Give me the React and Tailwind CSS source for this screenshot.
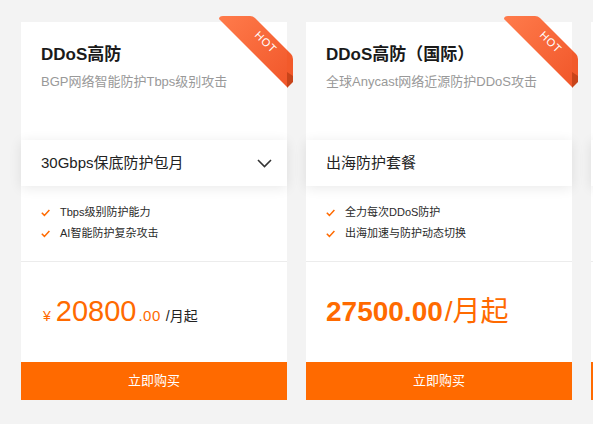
import React from 'react';

const font = { fontFamily: '"Liberation Sans", Arial, "Noto Sans CJK SC", sans-serif' };

const cards = [
  {
    title: 'DDoS高防',
    sub: 'BGP网络智能防护Tbps级别攻击',
    plan: '30Gbps保底防护包月',
    dropdown: true,
    features: ['Tbps级别防护能力', 'AI智能防护复杂攻击'],
    price: 'split',
  },
  {
    title: 'DDoS高防（国际）',
    sub: '全球Anycast网络近源防护DDoS攻击',
    plan: '出海防护套餐',
    dropdown: false,
    features: ['全力每次DDoS防护', '出海加速与防护动态切换'],
    price: 'bold',
  },
];

function Ribbon({ id }) {
  return (
    <svg
      className="absolute -top-[10px] -right-[10px] w-[82px] h-[80px] pointer-events-none"
      viewBox="215 12 82 80"
    >
      <defs>
        <linearGradient id={`rb-${id}`} x1="0" y1="0" x2="1" y2="1">
          <stop offset="0" stopColor="#ff7b4b" />
          <stop offset="1" stopColor="#f1572a" />
        </linearGradient>
      </defs>
      <path d="M219 19 Q219 16 223 16 L250 16 Q253 16 255 18 L287 50 L287 87 Z" fill={`url(#rb-${id})`} />
      <path d="M287 50 L291 54 Q293 56 293 59 L293 76 L287 76 Z" fill="#f25a2b" />
      <path d="M287 72 L293 76 L293 82 L287 88 Z" fill="#c8441a" />
      <text
        x="266"
        y="42"
        transform="rotate(45 266 42)"
        textAnchor="middle"
        dominantBaseline="central"
        fontSize="11"
        fill="#ffffff"
        letterSpacing="0.8"
        style={font}
      >
        HOT
      </text>
    </svg>
  );
}

function Check() {
  return (
    <svg width="9" height="8" viewBox="0 0 9 8" className="shrink-0">
      <polyline points="0.8,3.8 3.4,6.4 8.4,0.9" fill="none" stroke="#ff6a00" strokeWidth="1.5" />
    </svg>
  );
}

function Card({ c, i }) {
  return (
    <div className="relative w-[266px] h-[378px] shrink-0 bg-white flex flex-col">
      <Ribbon id={i} />
      <div className="h-[118px] pt-[21px] px-[20px]">
        <div className="text-[17px] leading-[24px] font-bold text-[#1a1a1a]">{c.title}</div>
        <div className="mt-[5px] text-[13px] leading-[20px] text-[#999999] whitespace-nowrap">{c.sub}</div>
      </div>
      <div className="relative z-10 h-[46px] bg-white flex items-center justify-between pl-[20px] pr-[15px] shadow-[0_2px_12px_rgba(0,0,0,0.09)]">
        <span className="text-[15px] text-[#222222]">{c.plan}</span>
        {c.dropdown && (
          <svg width="15" height="9" viewBox="0 0 15 9">
            <polyline points="1,1 7.5,7.5 14,1" fill="none" stroke="#333333" strokeWidth="1.6" />
          </svg>
        )}
      </div>
      <div className="h-[76px] pt-[16px] px-[20px] border-b border-[#ececec]">
        {c.features.map((f) => (
          <div key={f} className="flex items-center gap-[10px] h-[21px] text-[11px] text-[#2a2a2a]">
            <Check />
            <span>{f}</span>
          </div>
        ))}
      </div>
      <div className="flex-1 flex items-center px-[20px]">
        {c.price === 'split' ? (
          <div className="flex items-baseline text-[#ff6a00] ml-[2px]">
            <span className="text-[14px] mr-[5px]">¥</span>
            <span className="text-[29px] leading-none">20800</span>
            <span className="text-[15px] ml-[2px] tracking-[0.5px]">.00</span>
            <span className="text-[14px] text-[#222222] ml-[5px]">/月起</span>
          </div>
        ) : (
          <div className="flex items-baseline text-[#ff6a00]">
            <span className="text-[28px] leading-none font-bold">27500.00</span>
            <span className="text-[28px] leading-none ml-[2px]">/月起</span>
          </div>
        )}
      </div>
      <button className="h-[38px] w-full bg-[#ff6a00] text-white text-[13px] flex items-center justify-center">
        立即购买
      </button>
    </div>
  );
}

// next card in the row, only its left edge shows
function PeekCard() {
  return (
    <div className="w-[266px] h-[378px] shrink-0 bg-white flex flex-col">
      <div className="h-[118px]" />
      <div className="h-[46px] bg-white shadow-[0_2px_12px_rgba(0,0,0,0.09)]" />
      <div className="h-[76px] border-b border-[#ececec]" />
      <div className="flex-1" />
      <div className="h-[38px] bg-[#ff6a00]" />
    </div>
  );
}

export default function App() {
  return (
    <div className="w-[593px] h-[424px] overflow-hidden bg-[#f3f3f3]" style={font}>
      <div className="flex gap-[19px] pl-[21px] pt-[22px]">
        {cards.map((c, i) => (
          <Card key={i} c={c} i={i} />
        ))}
        <PeekCard />
      </div>
    </div>
  );
}
